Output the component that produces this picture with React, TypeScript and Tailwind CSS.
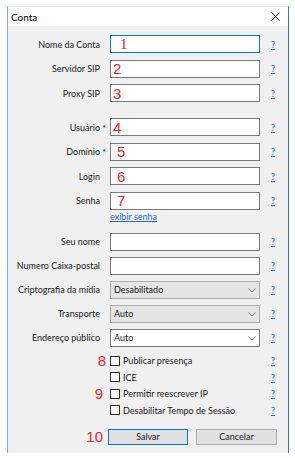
import React from "react";

const font = { fontFamily: "Lato, 'Noto Sans', sans-serif" };

function Help() {
  return (
    <span className="ml-[11px] text-[9px] leading-none text-[#1a6fd0] underline">?</span>
  );
}

function Mark({ n, pad, serif }: { n: string; pad: number; serif?: boolean }) {
  return (
    <span
      className={
        "text-[15px] leading-none text-[#e8262d] " +
        (serif ? "font-['Liberation_Serif',serif]" : "font-['Liberation_Sans',sans-serif]")
      }
      style={{ paddingLeft: pad }}
    >
      {n}
    </span>
  );
}

function Label({ text, star }: { text: string; star?: boolean }) {
  return (
    <div className="w-[92px] text-right text-[9px] leading-none text-[#1a1a1a]">
      <span className="relative">
        {text}
        {star && <span className="absolute -right-[6px] top-[2px]">*</span>}
      </span>
    </div>
  );
}

function TextRow({
  label,
  star,
  focused,
  mark,
}: {
  label: string;
  star?: boolean;
  focused?: boolean;
  mark?: React.ReactNode;
}) {
  return (
    <div className="flex h-[18px] items-center">
      <Label text={label} star={star} />
      <div
        className={
          "ml-[10px] flex h-[18px] w-[150px] items-center bg-white border " +
          (focused ? "border-[#0078d7]" : "border-[#7a7a7a]")
        }
      >
        {mark}
      </div>
      <Help />
    </div>
  );
}

function Chevron() {
  return (
    <svg width="8" height="5" viewBox="0 0 8 5" className="absolute right-[3px] top-[6px]">
      <polyline points="0.5,0.5 4,4 7.5,0.5" fill="none" stroke="#6a6a6a" strokeWidth="1" />
    </svg>
  );
}

function SelectRow({ label, value, enabled }: { label: string; value: string; enabled?: boolean }) {
  return (
    <div className="flex h-[18px] items-center">
      <Label text={label} />
      <div
        className={
          "relative ml-[10px] flex h-[18px] w-[150px] items-center border pl-[3px] text-[9px] leading-none text-[#1a1a1a] " +
          (enabled ? "bg-white border-[#7a7a7a]" : "bg-[#e5e5e5] border-[#adadad]")
        }
      >
        {value}
        <Chevron />
      </div>
      <Help />
    </div>
  );
}

function CheckRow({ text, mark, right }: { text: string; mark?: string; right: number }) {
  return (
    <div className="flex h-[16.5px] items-center">
      <div className="flex w-[102px] justify-end" style={{ paddingRight: right }}>
        {mark && <Mark n={mark} pad={0} />}
      </div>
      <div className="h-[10px] w-[10px] border border-[#333] bg-white" />
      <span className="ml-[3px] w-[137px] text-[9px] leading-none text-[#1a1a1a]">{text}</span>
      <Help />
    </div>
  );
}

export default function App() {
  return (
    <div className="min-h-screen bg-white pl-[7px] pt-[6px]" style={font}>
      <div className="flex h-[447px] w-[282px] flex-col border-l border-r border-t border-l-[#86abcd] border-r-[#2a78c0] border-t-[#dce6ef]">
        {/* title bar */}
        <div className="flex h-[19px] items-center justify-between bg-white pl-[3px] pr-[8px]">
          <span className="text-[10px] leading-none text-black">Conta</span>
          <svg width="9" height="9" viewBox="0 0 9 9">
            <path d="M0.5 0.5 L8.5 8.5 M8.5 0.5 L0.5 8.5" stroke="#111" strokeWidth="1" />
          </svg>
        </div>

        <div className="flex flex-1 flex-col bg-[#f0f0f0] pt-[9px]">
          <div className="flex flex-col gap-[6.5px]">
            <TextRow label="Nome da Conta" focused mark={<Mark n="1" pad={9} serif />} />
            <TextRow label="Servidor SIP" mark={<Mark n="2" pad={2} />} />
            <TextRow label="Proxy SIP" mark={<Mark n="3" pad={2} />} />
          </div>

          <div className="mt-[16px] flex flex-col gap-[6.5px]">
            <TextRow label="Usuário" star mark={<Mark n="4" pad={2} />} />
            <TextRow label="Domínio" star mark={<Mark n="5" pad={6} />} />
            <TextRow label="Login" mark={<Mark n="6" pad={6} />} />
            <TextRow label="Senha" mark={<Mark n="7" pad={6} />} />
          </div>

          <div className="mt-[1px] h-[12px] pl-[102px] text-[9px] leading-[12px] text-[#1a6fd0] underline">
            exibir senha
          </div>

          <div className="mt-[10px] flex flex-col gap-[6px]">
            <TextRow label="Seu nome" />
            <TextRow label="Numero Caixa-postal" />
            <SelectRow label="Criptografia da mídia" value="Desabilitado" />
            <SelectRow label="Transporte" value="Auto" />
            <SelectRow label="Endereço público" value="Auto" enabled />
          </div>

          <div className="mt-[6px] flex flex-col">
            <CheckRow text="Publicar presença" mark="8" right={4} />
            <CheckRow text="ICE" right={4} />
            <CheckRow text="Permitir reescrever IP" mark="9" right={7} />
            <CheckRow text="Desabilitar Tempo de Sessão" right={4} />
          </div>

          <div className="mt-[10px] flex h-[16.5px] items-center">
            <div className="flex w-[100px] justify-end pr-[5px]">
              <Mark n="10" pad={0} />
            </div>
            <button className="h-[16.5px] w-[80px] border border-[#0078d7] bg-[#e1e1e1] text-[9px] leading-none text-[#1a1a1a]">
              Salvar
            </button>
            <button className="ml-[8px] h-[16.5px] w-[81px] border border-[#adadad] bg-[#e1e1e1] text-[9px] leading-none text-[#1a1a1a]">
              Cancelar
            </button>
          </div>
        </div>
      </div>
    </div>
  );
}
